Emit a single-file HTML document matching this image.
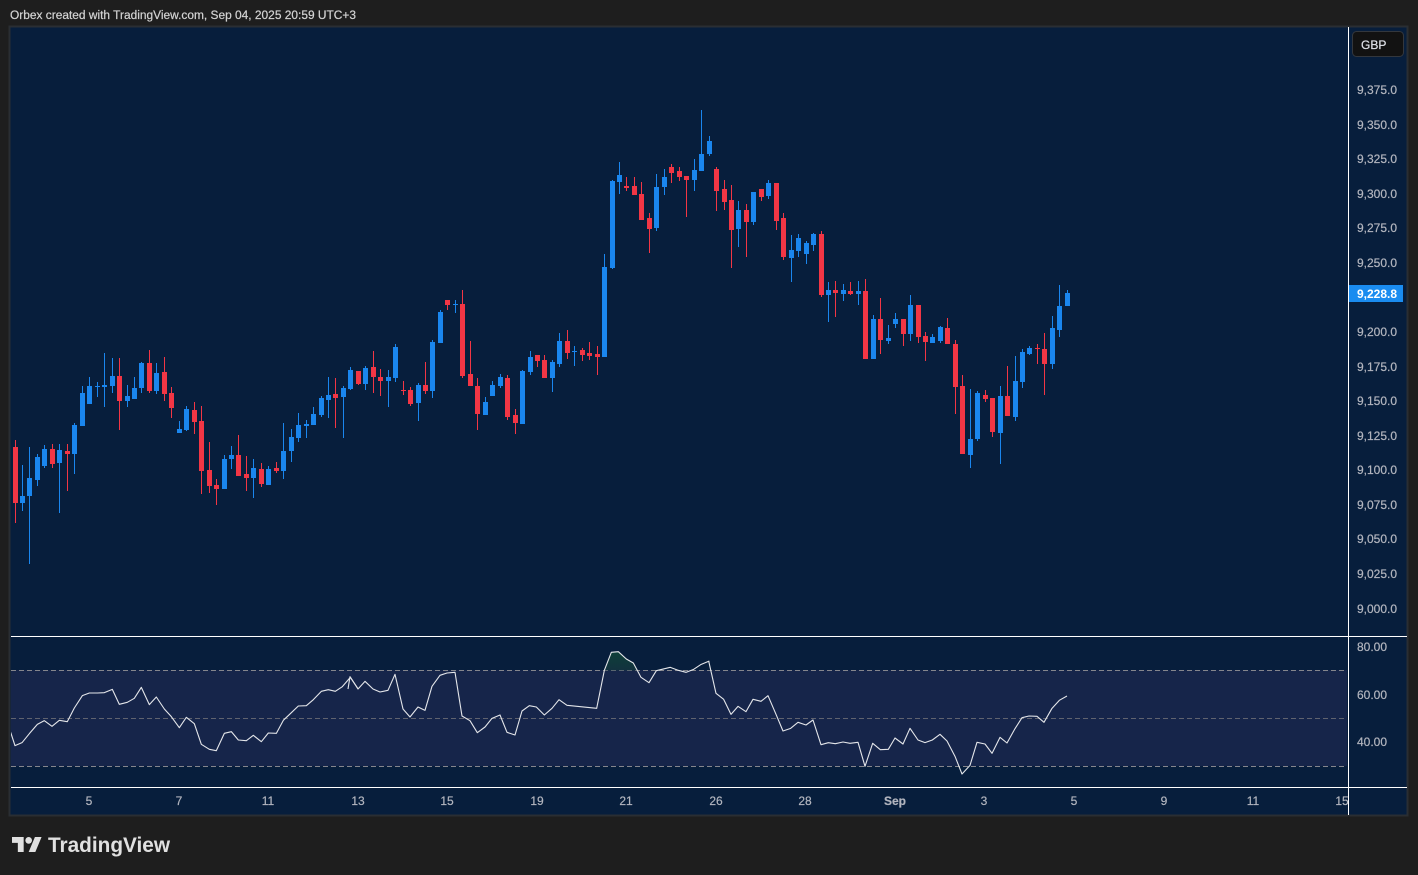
<!DOCTYPE html>
<html lang="en"><head><meta charset="utf-8"><title>Orbex chart</title>
<style>
html,body{margin:0;padding:0;background:#1e1e1e;width:1418px;height:875px;overflow:hidden}
svg{display:block}
text{font-family:"Liberation Sans",sans-serif;font-size:12px}
.ax text{fill:#b2b5be;stroke:#b2b5be;stroke-width:.2px}
</style></head><body>
<svg width="1418" height="875" viewBox="0 0 1418 875" xmlns="http://www.w3.org/2000/svg">
<defs>
<linearGradient id="ob" x1="0" y1="0" x2="0" y2="1"><stop offset="0" stop-color="#0e4038"/><stop offset="1" stop-color="#12323f"/></linearGradient>
<clipPath id="cl"><rect x="11" y="27" width="1337" height="788"/></clipPath>
</defs>
<rect width="1418" height="875" fill="#1e1e1e"/>
<text x="10" y="19" fill="#d3d3d3" stroke="#d3d3d3" stroke-width=".2" textLength="346" lengthAdjust="spacingAndGlyphs" style="font-size:11.5px">Orbex created with TradingView.com, Sep 04, 2025 20:59 UTC+3</text>
<rect x="9.5" y="26.5" width="1398" height="789" fill="#071e3c" stroke="#2a2e33" stroke-width="2"/>

<!-- RSI band -->
<rect x="11" y="670" width="1336" height="96" fill="#16254a"/>
<g stroke-width="1" shape-rendering="crispEdges" stroke-dasharray="5 3" fill="none">
<path d="M11 670.5H1347" stroke="#85868d"/>
<path d="M11 718.5H1347" stroke="#60636f"/>
<path d="M11 766.5H1347" stroke="#85868d"/>
</g>
<g transform="translate(350,630) scale(.33333)"><polygon points="763,121 784,67 805,65 829,87 850,99 861,121" fill="url(#ob)"/></g>
<g clip-path="url(#cl)" fill="none" stroke="#e4e6ea" stroke-width="3.3" stroke-linejoin="round">
<polyline transform="translate(0,630) scale(.33333)" points="24,285 33,310 45,347 66,338 88,311 112,283 133,272 156,289 178,271 202,275 223,234 247,197 268,189 292,189 313,188 337,178 358,223 382,217 403,205 424,172 448,224 469,201 493,237 514,260 538,293 559,262 583,281 604,343 628,358 649,362 673,310 694,305 715,330 739,332 760,316 784,335 805,309 829,310 850,271 874,248 895,228 919,227 940,209 964,184 985,179 1006,184 1027,170 1051,142 1074,176"/>
<polyline transform="translate(350,630) scale(.33333)" points="-6,177 0,140 24,177 45,154 69,177 90,186 114,181 135,133 159,237 180,261 204,231 225,241 246,169 270,136 291,129 315,127 336,258 360,272 382,308 405,291 426,265 450,255 471,307 495,315 516,243 538,227 559,231 583,255 606,235 627,209 651,226 740,235 763,121 784,67 805,65 829,87 850,99 873,142 897,158 919,122 961,112 985,121 1008,127 1031,118 1052,104 1078,93"/>
<polyline transform="translate(700,630) scale(.33333)" points="26,93 48,190 71,208 93,253 114,229 138,245 159,208 183,214 204,197 228,253 249,303 272,295 294,277 318,285 339,270 363,344 385,338 406,341 429,336 450,340 474,337 495,409 518,340 541,359 565,358 585,324 609,342 630,295 654,330 675,338 697,330 720,313 741,333 765,379 786,432 810,406 831,337 855,342 876,370 900,322 921,339 945,296 966,263 987,258 1011,259 1032,277 1056,235 1078,211 1101,198"/>
</g>

<!-- Blue wicks -->
<path fill="none" stroke="#1a86ee" stroke-width="1" shape-rendering="crispEdges" d="M22.5 465V511M29.5 447V564M37.5 454V486M44.5 445V468M59.5 444V513M74.5 423V474M82.5 386V426M89.5 377V404M97.5 382V397M104.5 353V407M112.5 358V393M127.5 385V407M134.5 377V399M141.5 362V393M156.5 363V394M179.5 421V433M186.5 406V431M224.5 455V489M231.5 446V469M253.5 459V498M268.5 466V485M283.5 423V479M291.5 429V462M298.5 413V442M306.5 420V438M313.5 407V425M321.5 396V417M328.5 377V418M343.5 386V438M350.5 367V390M365.5 366V390M388.5 370V407M395.5 344V382M418.5 383V421M432.5 340V398M440.5 310V343M455.5 300V313M485.5 397V415M492.5 381V396M500.5 374V388M522.5 370V424M530.5 351V375M552.5 360V392M559.5 333V367M574.5 346V366M604.5 254V357M612.5 180V269M619.5 162V194M656.5 174V231M664.5 169V195M694.5 159V191M701.5 110V171M709.5 136V156M738.5 201V247M753.5 192V225M768.5 180V199M791.5 235V282M798.5 234V257M806.5 241V264M813.5 233V251M828.5 282V322M843.5 284V301M858.5 281V305M873.5 315V359M888.5 325V344M895.5 313V328M910.5 295V341M932.5 334V343M940.5 326V343M970.5 389V468M977.5 391V441M1000.5 386V464M1015.5 356V421M1022.5 349V388M1029.5 346V355M1052.5 316V369M1059.5 285V337M1067.5 290V306"/>
<!-- Blue bodies -->
<path fill="none" stroke="#1a86ee" stroke-width="5" shape-rendering="crispEdges" d="M22.5 496V503M29.5 478V496M37.5 457V480M44.5 449V466M59.5 450V463M74.5 425V454M82.5 393V426M89.5 386V404M97.5 386V387M104.5 385V387M112.5 376V386M127.5 396V401M134.5 388V399M141.5 363V388M156.5 373V391M179.5 429V433M186.5 409V430M224.5 459V489M231.5 455V459M253.5 468V478M268.5 469V485M283.5 451V471M291.5 437V451M298.5 425V438M306.5 424V426M313.5 414V425M321.5 398V415M328.5 395V400M343.5 388V397M350.5 370V389M365.5 368V384M388.5 377V381M395.5 347V378M418.5 385V403M432.5 342V391M440.5 312V343M455.5 304V305M485.5 402V415M492.5 385V396M500.5 377V386M522.5 371V424M530.5 357V372M552.5 362V378M559.5 341V364M574.5 351V352M604.5 267V357M612.5 181V268M619.5 175V182M656.5 187V228M664.5 177V187M694.5 170V180M701.5 154V171M709.5 141V154M738.5 210V229M753.5 192V222M768.5 183V196M791.5 250V258M798.5 238V251M806.5 243V254M813.5 234V245M828.5 290V295M843.5 290V294M858.5 291V294M873.5 319V359M888.5 338V341M895.5 319V324M910.5 305V334M932.5 337V343M940.5 327V341M970.5 439V455M977.5 393V439M1000.5 396V433M1015.5 381V417M1022.5 352V382M1029.5 348V354M1052.5 328V364M1059.5 306V330M1067.5 293V306"/>
<!-- Red wicks -->
<path fill="none" stroke="#f23645" stroke-width="1" shape-rendering="crispEdges" d="M15.5 440V523M52.5 444V468M67.5 444V491M119.5 358V430M149.5 350V393M164.5 357V401M171.5 387V418M194.5 402V434M201.5 406V494M209.5 442V493M216.5 479V505M238.5 435V476M246.5 456V491M261.5 463V487M276.5 462V473M335.5 378V428M358.5 371V385M373.5 351V393M380.5 369V396M403.5 381V395M410.5 387V406M425.5 362V394M447.5 300V310M462.5 290V378M470.5 341V386M477.5 378V430M507.5 375V420M515.5 409V434M537.5 355V367M544.5 355V378M567.5 330V359M582.5 348V361M589.5 342V360M597.5 346V375M626.5 177V191M634.5 177V195M641.5 182V220M649.5 213V253M671.5 164V183M679.5 167V181M686.5 176V217M716.5 167V211M724.5 180V210M731.5 185V268M746.5 204V257M761.5 189V201M776.5 183V230M783.5 213V260M821.5 231V297M835.5 281V317M850.5 282V295M865.5 279V359M880.5 298V354M903.5 319V346M918.5 305V343M925.5 332V361M947.5 318V344M955.5 340V414M962.5 375V454M985.5 390V402M992.5 398V437M1007.5 366V416M1037.5 344V364M1044.5 333V395"/>
<!-- Red bodies -->
<path fill="none" stroke="#f23645" stroke-width="5" shape-rendering="crispEdges" d="M15.5 447V503M52.5 449V464M67.5 451V454M119.5 376V401M149.5 363V391M164.5 372V394M171.5 393V408M194.5 410V422M201.5 421V471M209.5 470V486M216.5 485V489M238.5 455V476M246.5 474V478M261.5 469V484M276.5 468V471M335.5 394V398M358.5 371V384M373.5 367V377M380.5 377V381M403.5 390V391M410.5 390V404M425.5 385V391M447.5 300V305M462.5 304V376M470.5 374V386M477.5 386V414M507.5 378V417M515.5 415V423M537.5 355V361M544.5 360V378M567.5 341V353M582.5 350V355M589.5 353V356M597.5 354V357M626.5 186V188M634.5 186V195M641.5 194V220M649.5 218V229M671.5 167V173M679.5 171V177M686.5 176V180M716.5 169V191M724.5 189V202M731.5 200V230M746.5 210V222M761.5 189V197M776.5 183V221M783.5 218V257M821.5 234V295M835.5 290V293M850.5 291V294M865.5 291V359M880.5 319V340M903.5 319V334M918.5 305V337M925.5 336V342M947.5 328V344M955.5 344V387M962.5 386V454M985.5 395V399M992.5 398V432M1007.5 396V416M1037.5 348V349M1044.5 349V364"/>

<!-- frame lines -->
<g fill="#ffffff" shape-rendering="crispEdges">
<rect x="11" y="636" width="1396" height="1"/>
<rect x="11" y="787" width="1396" height="1"/>
</g>

<!-- price axis -->
<g class="ax">
<text x="1357" y="94">9,375.0</text>
<text x="1357" y="129">9,350.0</text>
<text x="1357" y="163">9,325.0</text>
<text x="1357" y="198">9,300.0</text>
<text x="1357" y="232">9,275.0</text>
<text x="1357" y="267">9,250.0</text>
<text x="1357" y="336">9,200.0</text>
<text x="1357" y="371">9,175.0</text>
<text x="1357" y="405">9,150.0</text>
<text x="1357" y="440">9,125.0</text>
<text x="1357" y="474">9,100.0</text>
<text x="1357" y="509">9,075.0</text>
<text x="1357" y="543">9,050.0</text>
<text x="1357" y="578">9,025.0</text>
<text x="1357" y="613">9,000.0</text>
<text x="1357" y="651">80.00</text>
<text x="1357" y="699">60.00</text>
<text x="1357" y="746">40.00</text>
</g>
<rect x="1349" y="285" width="54" height="17" fill="#1a8cf0"/>
<text x="1357" y="298" fill="#ffffff" style="font-weight:bold">9,228.8</text>
<rect x="1352.5" y="31.5" width="51" height="25" rx="4" fill="#121212" stroke="#33373d"/>
<text x="1361" y="49" fill="#e0e2e8" stroke="#e0e2e8" stroke-width=".2">GBP</text>

<!-- time axis -->
<g class="ax" text-anchor="middle">
<text x="89" y="805">5</text>
<text x="179" y="805">7</text>
<text x="268" y="805">11</text>
<text x="358" y="805">13</text>
<text x="447" y="805">15</text>
<text x="537" y="805">19</text>
<text x="626" y="805">21</text>
<text x="716" y="805">26</text>
<text x="805" y="805">28</text>
<text x="895" y="805" style="font-weight:bold">Sep</text>
<text x="984" y="805">3</text>
<text x="1074" y="805">5</text>
<text x="1164" y="805">9</text>
<text x="1253" y="805">11</text>
<text x="1342" y="805">15</text>
</g>
<rect x="1348" y="27" width="1" height="788" fill="#ffffff" shape-rendering="crispEdges"/>

<!-- logo -->
<g transform="translate(12,833.7) scale(.8333)" fill="#e0e0e0">
<path d="M14 22H7V11H0V4h14v18zM28 22h-8l7.5-18h8L28 22z"/><circle cx="20" cy="8" r="4"/>
</g>
<text x="48" y="852" fill="#e0e0e0" textLength="122" lengthAdjust="spacingAndGlyphs" style="font-size:21px;font-weight:bold">TradingView</text>
</svg>
</body></html>
